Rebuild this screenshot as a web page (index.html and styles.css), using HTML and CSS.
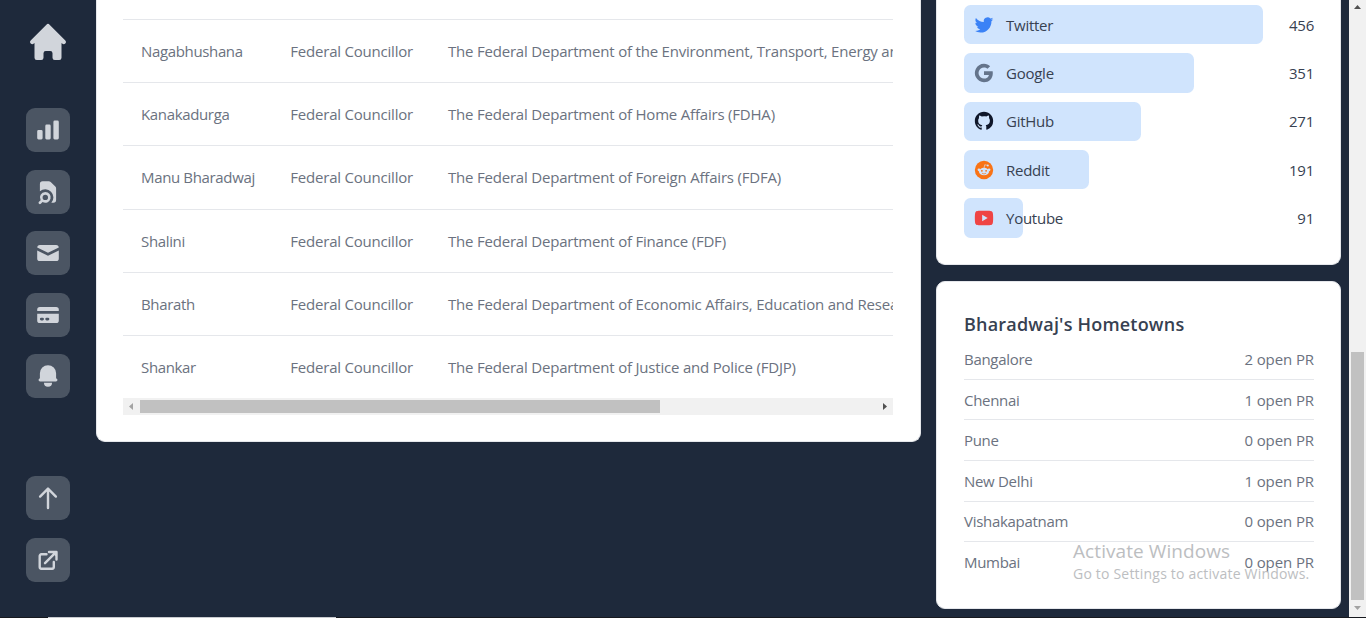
FILE: index.html
```html
<!DOCTYPE html>
<html lang="en">
<head>
<meta charset="utf-8">
<title>Dashboard</title>
<link rel="stylesheet" href="styles.css">
</head>
<body>
<div class="window">
  <div class="page">
    <nav class="sidebar">
      <svg class="home" viewBox="-.22 -.22 20.44 20.44"><path d="M10.707 2.293a1 1 0 00-1.414 0l-7 7a1 1 0 001.414 1.414L4 10.414V17a1 1 0 001 1h2a1 1 0 001-1v-2a1 1 0 011-1h2a1 1 0 011 1v2a1 1 0 001 1h2a1 1 0 001-1v-6.586l.293.293a1 1 0 001.414-1.414l-7-7z"/></svg>
      <div class="nav-group">
        <a class="nav-btn"><svg viewBox="-.37 -.37 20.74 20.74"><path d="M2 11a1 1 0 011-1h2a1 1 0 011 1v5a1 1 0 01-1 1H3a1 1 0 01-1-1v-5zM8 7a1 1 0 011-1h2a1 1 0 011 1v9a1 1 0 01-1 1H9a1 1 0 01-1-1V7zM14 4a1 1 0 011-1h2a1 1 0 011 1v12a1 1 0 01-1 1h-2a1 1 0 01-1-1V4z"/></svg></a>
        <a class="nav-btn"><svg viewBox="-.37 -.37 20.74 20.74"><path d="M4 4a2 2 0 012-2h4.586A2 2 0 0112 2.586L15.414 6A2 2 0 0116 7.414V16a2 2 0 01-2 2h-1.528A6 6 0 004 9.528V4z"/><path fill-rule="evenodd" d="M8 10a4 4 0 00-3.446 6.032l-1.261 1.26a1 1 0 101.414 1.415l1.261-1.261A4 4 0 108 10zm-2 4a2 2 0 114 0 2 2 0 01-4 0z"/></svg></a>
        <a class="nav-btn"><svg viewBox="-.37 -.37 20.74 20.74"><path d="M2.003 5.884L10 9.882l7.997-3.998A2 2 0 0016 4H4a2 2 0 00-1.997 1.884z"/><path d="M18 8.118l-8 4-8-4V14a2 2 0 002 2h12a2 2 0 002-2V8.118z"/></svg></a>
        <a class="nav-btn"><svg viewBox="-.37 -.37 20.74 20.74"><path d="M4 4a2 2 0 00-2 2v1h16V6a2 2 0 00-2-2H4z"/><path fill-rule="evenodd" d="M18 9H2v5a2 2 0 002 2h12a2 2 0 002-2V9zM4 13a1 1 0 011-1h1a1 1 0 110 2H5a1 1 0 01-1-1zm5-1a1 1 0 100 2h1a1 1 0 100-2H9z"/></svg></a>
        <a class="nav-btn"><svg viewBox="-.37 -.37 20.74 20.74"><path d="M10 2a6 6 0 00-6 6v3.586l-.707.707A1 1 0 004 14h12a1 1 0 00.707-1.707L16 11.586V8a6 6 0 00-6-6zM10 18a3 3 0 01-3-3h6a3 3 0 01-3 3z"/></svg></a>
      </div>
      <div class="nav-group nav-bottom">
        <a class="nav-btn"><svg class="line" viewBox="-.5 -.5 28 28"><path d="M13.5 23.500V4.200M5.600 12.100l7.900-8 7.900 8"/></svg></a>
        <a class="nav-btn"><svg class="line" viewBox="-.5 -.5 28 28"><path d="M12 7.800H6.800a1.600 1.600 0 00-1.600 1.600v11.200a1.600 1.600 0 001.600 1.600h10.900a1.600 1.600 0 001.600-1.600V15.500M10.500 16.700L21 6.200M14.500 5.500h7.500v7.500"/><path class="solid" d="M17 5.500h5v5z"/></svg></a>
      </div>
    </nav>
    <main class="content">
      <section class="card table-card">
        <div class="table">
          <div class="tr"><span class="name">Nagabhushana</span><span class="role">Federal Councillor</span><span class="dept">The Federal Department of the Environment, Transport, Energy and Communications (DETEC)</span></div>
          <div class="tr"><span class="name">Kanakadurga</span><span class="role">Federal Councillor</span><span class="dept">The Federal Department of Home Affairs (FDHA)</span></div>
          <div class="tr"><span class="name">Manu Bharadwaj</span><span class="role">Federal Councillor</span><span class="dept">The Federal Department of Foreign Affairs (FDFA)</span></div>
          <div class="tr"><span class="name">Shalini</span><span class="role">Federal Councillor</span><span class="dept">The Federal Department of Finance (FDF)</span></div>
          <div class="tr"><span class="name">Bharath</span><span class="role">Federal Councillor</span><span class="dept">The Federal Department of Economic Affairs, Education and Research (EAER)</span></div>
          <div class="tr"><span class="name">Shankar</span><span class="role">Federal Councillor</span><span class="dept">The Federal Department of Justice and Police (FDJP)</span></div>
        </div>
        <div class="hscroll">
          <svg viewBox="0 0 17 17"><path fill="#a3a3a3" d="M10 5v7L6 8.500z"/></svg>
          <div class="hthumb"></div>
          <svg class="end" viewBox="0 0 17 17"><path fill="#505050" d="M7 5v7l4-3.500z"/></svg>
        </div>
      </section>
      <aside class="side">
        <section class="card bars-card">
          <div class="bar-row"><div class="bar" style="width:299px"><svg viewBox="0 0 24 24" fill="#3b82f6"><path d="M22.162 5.656a8.384 8.384 0 0 1-2.402.658A4.196 4.196 0 0 0 21.6 4c-.82.488-1.719.83-2.656 1.015a4.182 4.182 0 0 0-7.126 3.814 11.874 11.874 0 0 1-8.62-4.37 4.168 4.168 0 0 0-.566 2.103c0 1.45.738 2.731 1.86 3.481a4.168 4.168 0 0 1-1.894-.523v.052a4.185 4.185 0 0 0 3.355 4.101 4.21 4.21 0 0 1-1.89.072A4.185 4.185 0 0 0 7.97 16.65a8.394 8.394 0 0 1-6.191 1.732 11.83 11.83 0 0 0 6.41 1.88c7.693 0 11.9-6.373 11.9-11.9 0-.18-.005-.362-.013-.54a8.496 8.496 0 0 0 2.087-2.165z"/></svg><span>Twitter</span></div><b>456</b></div>
          <div class="bar-row"><div class="bar" style="width:230px"><svg viewBox="0 0 24 24" fill="#64748b"><path d="M3.064 7.509C4.709 4.241 8.091 2 12 2c2.695 0 4.959.991 6.691 2.605l-2.868 2.868C14.786 6.482 13.468 5.977 12 5.977c-2.605 0-4.809 1.759-5.595 4.123-.2.6-.314 1.241-.314 1.9s.114 1.3.314 1.9c.786 2.364 2.99 4.123 5.595 4.123 1.345 0 2.491-.355 3.386-.955 1.059-.709 1.764-1.768 1.996-3.018H12v-3.868h9.418c.118.654.182 1.336.182 2.045 0 3.046-1.091 5.61-2.982 7.35C16.964 21.105 14.7 22 12 22c-3.909 0-7.291-2.241-8.936-5.509C2.386 15.141 2 13.614 2 12s.386-3.141 1.064-4.491z"/></svg><span>Google</span></div><b>351</b></div>
          <div class="bar-row"><div class="bar" style="width:177px"><svg viewBox="0 0 24 24" fill="#0f172a"><path d="M12.001 2C6.476 2 2.001 6.475 2.001 12c0 4.425 2.862 8.163 6.837 9.488.5.087.688-.213.688-.476 0-.237-.013-1.024-.013-1.862-2.512.463-3.162-.612-3.362-1.175-.113-.287-.6-1.175-1.025-1.412-.35-.188-.85-.65-.013-.663.788-.013 1.35.725 1.538 1.025.9 1.513 2.337 1.087 2.912.825.088-.65.35-1.088.638-1.338-2.225-.25-4.55-1.112-4.55-4.937 0-1.088.387-1.988 1.025-2.688-.1-.25-.45-1.275.1-2.65 0 0 .837-.262 2.75 1.026a9.28 9.28 0 012.5-.338c.85 0 1.7.112 2.5.337 1.912-1.3 2.75-1.024 2.75-1.024.55 1.375.2 2.4.1 2.65.637.7 1.025 1.587 1.025 2.687 0 3.838-2.337 4.688-4.562 4.938.362.312.675.912.675 1.85 0 1.337-.013 2.412-.013 2.75 0 .262.188.574.688.474A10.02 10.02 0 0022.001 12c0-5.525-4.475-10-10-10z"/></svg><span>GitHub</span></div><b>271</b></div>
          <div class="bar-row"><div class="bar" style="width:125px"><svg viewBox="0 0 24 24"><circle cx="12" cy="12" r="10" fill="#f97316"/><g fill="#d0e4fd"><ellipse cx="12" cy="13.700" rx="5.500" ry="4.100"/><circle cx="6.500" cy="11.800" r="1.500"/><circle cx="17.500" cy="11.800" r="1.500"/><circle cx="16.200" cy="7" r="1.050"/></g><path d="M12 10l.8-3.700 3.200.7" fill="none" stroke="#d0e4fd" stroke-width=".7"/><circle cx="9.700" cy="12.900" r="1" fill="#f97316"/><circle cx="14.300" cy="12.900" r="1" fill="#f97316"/><path d="M9.700 15.500q2.300 1.700 4.600 0" fill="none" stroke="#f97316" stroke-width=".75"/></svg><span>Reddit</span></div><b>191</b></div>
          <div class="bar-row"><div class="bar" style="width:59px"><svg viewBox="0 0 24 24"><path fill="#ef4444" fill-rule="evenodd" d="M12 4c7 0 8.500.200 9.200 1.400.6 1 .8 3.400.8 6.600s-.2 5.600-.8 6.600C20.500 19.800 19 20 12 20s-8.500-.2-9.200-1.400C2.200 17.600 2 15.200 2 12s.2-5.600.8-6.600C3.500 4.200 5 4 12 4zM10 8.500v7l6-3.500z"/></svg><span>Youtube</span></div><b>91</b></div>
        </section>
        <section class="card towns">
          <h2>Bharadwaj's Hometowns</h2>
          <ul>
            <li><span>Bangalore</span><span>2 open PR</span></li>
            <li><span>Chennai</span><span>1 open PR</span></li>
            <li><span>Pune</span><span>0 open PR</span></li>
            <li><span>New Delhi</span><span>1 open PR</span></li>
            <li><span>Vishakapatnam</span><span>0 open PR</span></li>
            <li><span>Mumbai</span><span>0 open PR</span></li>
          </ul>
        </section>
      </aside>
    </main>
  </div>
  <div class="vscroll">
    <svg viewBox="0 0 17 17"><path fill="#505050" d="M5 9h7L8.500 5z"/></svg>
    <div class="vthumb"></div>
    <svg viewBox="0 0 17 17"><path fill="#a3a3a3" d="M5 6h7l-3.500 4z"/></svg>
  </div>
  <div class="watermark"><div class="wm-title">Activate Windows</div><div class="wm-sub">Go to Settings to activate Windows.</div></div>
  <div class="edge"><i></i></div>
</div>
</body>
</html>
```
FILE: styles.css
```css
* { box-sizing: border-box; }
body { margin: 0; font-family: "Open Sans", "Noto Sans", sans-serif; }
.window { position: relative; display: flex; width: 1366px; height: 618px; overflow: hidden; background: #1e293b; }
.page { display: flex; width: 1349px; height: 618px; }

.sidebar { display: flex; flex-direction: column; align-items: center; width: 96px; padding-top: 19px; }
.home { width: 46px; height: 46px; fill: #d1d5db; }
.nav-group { display: flex; flex-direction: column; gap: 17.5px; margin-top: 43px; }
.nav-bottom { margin-top: 78px; }
.nav-btn { display: flex; align-items: center; justify-content: center; width: 44px; height: 44px; border-radius: 9px; background: #4b5563; }
.nav-btn svg { width: 28px; height: 28px; fill: #d1d5db; }
.nav-btn .line { fill: none; stroke: #d1d5db; stroke-width: 2.4; stroke-linecap: round; stroke-linejoin: round; }
.nav-btn .solid { fill: #d1d5db; stroke: none; }

.content { display: flex; align-items: flex-start; gap: 15px; }
.card { background: #fff; border: 1px solid #e5e7eb; border-radius: 9px; }
.table-card { width: 825px; height: 442px; padding: 19px 27px 0 26px; border-top: 0; border-radius: 0 0 9px 9px; }
.table { overflow: hidden; width: 770px; height: 379px; }
.tr { display: flex; align-items: center; height: 63.2px; padding-left: 18px; border-top: 1px solid #e5e7eb; color: #6b7280; font-size: 15px; white-space: nowrap; }
.name { flex: none; width: 149.3px; letter-spacing: -0.35px; }
.role { flex: none; width: 157.7px; letter-spacing: -0.21px; }
.dept { flex: none; letter-spacing: -0.2px; }
.hscroll { display: flex; align-items: center; width: 770px; height: 17px; background: #f1f1f1; }
.hscroll svg { width: 17px; height: 17px; }
.hthumb { width: 520px; height: 13px; background: #c1c1c1; }
.hscroll .end { margin-left: auto; }

.side { display: flex; flex-direction: column; gap: 16px; width: 405px; }
.bars-card { display: flex; flex-direction: column; gap: 9px; height: 265px; padding: 4.9px 26px 0 27px; border-top: 0; border-radius: 0 0 9px 9px; }
.bar-row { display: flex; align-items: center; justify-content: space-between; height: 39.4px; color: #374151; font-size: 15px; letter-spacing: -0.25px; }
.bar { display: flex; align-items: center; height: 100%; padding-left: 9px; border-radius: 6.5px; background: #d0e4fd; white-space: nowrap; }
.bar svg { flex: none; width: 22px; height: 22px; margin-right: 11px; }
.bar-row b { font-weight: 400; }

.towns { height: 328px; padding: 29px 26px 0 27px; }
.towns h2 { margin: 0; color: #374151; font-size: 18px; font-weight: 600; line-height: 27px; letter-spacing: 0.2px; }
.towns ul { margin: 0; padding: 1.4px 0 0; list-style: none; color: #6b7280; font-size: 15px; letter-spacing: -0.3px; }
.towns li { display: flex; align-items: center; justify-content: space-between; height: 40.55px; border-bottom: 1px solid #e5e7eb; }
.towns li span:last-child { letter-spacing: -0.1px; }
.towns li:last-child { border: 0; }

.vscroll { display: flex; flex-direction: column; align-items: center; width: 17px; height: 617px; background: #f1f1f1; }
.vscroll svg { width: 17px; height: 17px; }
.vthumb { width: 13px; height: 248px; margin-top: auto; background: #c1c1c1; }

.watermark { position: absolute; left: 1073px; top: 539px; color: #bcbec1; white-space: nowrap; }
.wm-title { font-size: 19px; line-height: 24px; letter-spacing: 0.08px; }
.wm-sub { font-size: 14px; line-height: 21px; letter-spacing: 0.2px; }
.edge { position: absolute; left: 0; top: 617px; width: 1366px; height: 1px; padding-left: 48px; background: #17191f; }
.edge i { display: block; width: 288px; height: 1px; background: #c9cbd0; }
```
